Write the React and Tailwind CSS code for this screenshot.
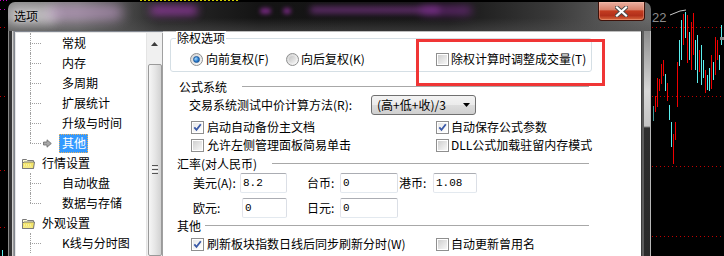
import React from 'react'

const RED = '#f00000'
const CYAN = '#5cf0f0'

// candle sticks of the chart behind the dialog: [x, top, bottom, colour]
const candles = [
  [653, 106, 121, '#4a9a9a'],
  [655, 96, 112, RED],
  [657, 78, 107, RED],
  [659, 79, 91, RED],
  [661, 64, 84, RED],
  [663, 60, 76, RED],
  [665, 74, 91, CYAN],
  [667, 83, 101, RED],
  [669, 105, 120, CYAN],
  [671, 122, 147, CYAN],
  [673, 134, 164, RED],
  [675, 122, 140, RED],
  [677, 62, 107, RED],
  [679, 40, 66, CYAN],
  [681, 20, 60, CYAN],
  [683, 14, 45, RED],
  [685, 12, 38, CYAN],
  [687, 15, 63, RED],
  [689, 32, 60, CYAN],
  [691, 22, 70, RED],
  [693, 13, 55, RED],
  [695, 40, 70, CYAN],
  [697, 35, 83, CYAN],
  [699, 50, 72, RED],
  [701, 45, 85, CYAN],
  [703, 60, 78, CYAN],
  [705, 70, 93, RED],
  [707, 75, 90, CYAN],
  [709, 68, 91, CYAN],
  [711, 55, 89, RED],
  [713, 62, 80, CYAN],
  [715, 37, 75, RED],
  [717, 40, 60, RED],
  [719, 55, 70, CYAN],
  [721, 25, 45, CYAN],
]

function ChartBackground() {
  return (
    <svg className="absolute inset-0" width="724" height="256" viewBox="0 0 724 256">
      <line x1="0" y1="0.5" x2="8" y2="0.5" stroke="#c000c0" strokeDasharray="1 2" />
      <line x1="140" y1="0.5" x2="240" y2="0.5" stroke="#d0d000" strokeDasharray="2 2" />
      <line x1="0" y1="9.5" x2="8" y2="9.5" stroke="#c000c0" strokeDasharray="1 3" />
      {[27, 96, 170, 227].map((y) => (
        <line key={'l' + y} x1="0" y1={y + 0.5} x2="8" y2={y + 0.5} stroke="#c00000" strokeDasharray="1 3" />
      ))}
      {[27, 96, 166, 236].map((y) => (
        <line key={'r' + y} x1="652" y1={y + 0.5} x2="724" y2={y + 0.5} stroke="#c00000" strokeDasharray="1 3" />
      ))}
      <line x1="2.5" y1="250" x2="2.5" y2="256" stroke={CYAN} />
      {candles.map(([x, y1, y2, c]) => (
        <line key={x} x1={x + 0.5} y1={y1} x2={x + 0.5} y2={y2} stroke={c} strokeWidth="1" />
      ))}
      <text x="652" y="22" fill="#8c8c8c" fontSize="13" fontFamily="Liberation Sans, sans-serif">22</text>
      <polyline points="670,15 680,11 686,10" fill="none" stroke="#c8c8c8" strokeWidth="1" />
      <rect x="720" y="37" width="4" height="3" fill="#8a8a8a" />
    </svg>
  )
}

function Checkbox({ checked }) {
  return (
    <span className="w-[13px] h-[13px] shrink-0 border border-[#8f8f8f] bg-white p-[1px] flex">
      <span
        className={`flex-1 flex items-center justify-center ${
          checked
            ? 'bg-[linear-gradient(135deg,#e8e8e8,#ffffff)]'
            : 'bg-[linear-gradient(135deg,#cfcfcf,#f7f7f7)]'
        }`}
      >
        {checked && (
          <svg width="9" height="9" viewBox="0 0 9 9">
            <path d="M1.3 4.3 L3.5 6.9 L7.8 1.2" fill="none" stroke="#3b5aa8" strokeWidth="1.8" />
          </svg>
        )}
      </span>
    </span>
  )
}

function Radio({ checked }) {
  return (
    <span className="w-[13px] h-[13px] shrink-0 rounded-full border border-[#8e8f8f] bg-[linear-gradient(135deg,#d2d2d2,#fbfbfb)] flex items-center justify-center">
      {checked ? (
        <span className="w-[7px] h-[7px] rounded-full border border-[#1d5a9c] bg-[radial-gradient(circle_at_35%_35%,#a8dcff,#2a7ed0_55%,#0e4a8e)]" />
      ) : (
        <span className="w-[7px] h-[7px] rounded-full bg-[linear-gradient(135deg,#c4c4c4,#f2f2f2)]" />
      )}
    </span>
  )
}

function Section({ label, labelW, pl, mt }) {
  return (
    <div className={`w-[419px] h-[14px] flex items-center ${pl} ${mt}`}>
      <span className={`${labelW} shrink-0`}>{label}</span>
      <div className="flex-1 h-px bg-[#a8a8a8] mb-[2px]" />
    </div>
  )
}

function TextBox({ value, w }) {
  return (
    <div
      className={`${w} h-[20px] shrink-0 rounded-[2px] border border-[#abadb3] border-l-[#e2e3ea] border-r-[#dbdfe6] border-b-[#e3e9ef] bg-white pl-[2px] pt-[2px] font-['Liberation_Mono',monospace] text-[11px] leading-[14px]`}
    >
      {value}
    </div>
  )
}

function Connector({ last }) {
  return (
    <div className="w-[11px] h-full flex flex-col shrink-0">
      <div className="h-[10px] border-l border-dotted border-[#a0a0a0]" />
      {last ? (
        <div className="h-[10px] border-t border-dotted border-[#a0a0a0]" />
      ) : (
        <div className="h-[10px] border-t border-l border-dotted border-[#a0a0a0]" />
      )}
    </div>
  )
}

function TreeChild({ label, last, selected }) {
  return (
    <div className="h-[20px] flex items-center">
      <div className="w-[14px] shrink-0" />
      <Connector last={last} />
      <div className="w-[2px] shrink-0" />
      <div className="w-[9px] shrink-0 flex items-center">
        {selected && (
          <svg width="9" height="9" viewBox="0 0 9 9">
            <path d="M0.5 3 H4 V0.8 L8.3 4.5 L4 8.2 V6 H0.5 Z" fill="#a8a8a8" stroke="#6a6a6a" strokeWidth="0.8" />
          </svg>
        )}
      </div>
      <div className="w-[7px] shrink-0" />
      {selected ? (
        <span className="h-[19px] flex items-center pl-[2px] pr-[1px] border border-dotted border-[#e8b060] bg-[#3399ff] text-white">
          {label}
        </span>
      ) : (
        <span className="pl-[3px]">{label}</span>
      )}
    </div>
  )
}

function FolderIcon() {
  return (
    <svg width="13" height="13" viewBox="0 0 13 13" className="shrink-0">
      <path d="M0.5 2.5 H4.5 L5.5 3.5 H11.5 V11.5 H0.5 Z" fill="#fffbd0" stroke="#7a7a7a" />
      <path d="M0.5 6.5 L2 5 H12.5 L11.5 11.5 H0.5 Z" fill="#f2e46a" stroke="#7a7a7a" />
      <path d="M2 8 H10 M1.5 10 H10" stroke="#fffbd0" strokeDasharray="1 1" />
    </svg>
  )
}

function TreeFolder({ label }) {
  return (
    <div className="h-[20px] flex items-center">
      <div className="w-[6px] shrink-0" />
      <FolderIcon />
      <div className="w-[7px] shrink-0" />
      <span>{label}</span>
    </div>
  )
}

function Tree() {
  return (
    <div className="w-[149px] shrink-0 flex border-l border-t border-[#828790]">
      <div className="flex-1 flex border-l border-t border-[#e6e6e6] bg-white">
        <div className="flex-1 flex flex-col">
          <TreeChild label="常规" />
          <TreeChild label="内存" />
          <TreeChild label="多周期" />
          <TreeChild label="扩展统计" />
          <TreeChild label="升级与时间" />
          <TreeChild label="其他" last selected />
          <TreeFolder label="行情设置" />
          <TreeChild label="自动收盘" />
          <TreeChild label="数据与存储" last />
          <TreeFolder label="外观设置" />
          <TreeChild label="K线与分时图" />
        </div>
        <div className="w-[16px] shrink-0 bg-[#f0f0f0] border-l border-[#e4e4e4] flex flex-col items-center">
          <div className="h-[21px] w-full flex items-center justify-center pt-[1px]">
            <svg width="7" height="4" viewBox="0 0 7 4">
              <path d="M0 4 L3.5 0 L7 4 Z" fill="#3c3c3c" />
            </svg>
          </div>
          <div className="h-[10px]" />
          <div className="w-[14px] flex-1 rounded-[2px] border border-[#9a9a9a] bg-[linear-gradient(to_right,#f6f6f6,#e6e6e6_50%,#d2d2d2)] flex flex-col items-center gap-[1px] pt-[100px]">
            <div className="w-[6px] h-px bg-[#555]" />
            <div className="w-[6px] h-px bg-[#f8f8f8]" />
            <div className="w-[6px] h-px bg-[#555]" />
            <div className="w-[6px] h-px bg-[#f8f8f8]" />
            <div className="w-[6px] h-px bg-[#555]" />
          </div>
        </div>
        <div className="w-px shrink-0 bg-[#a0a0a0]" />
      </div>
    </div>
  )
}

function OptionsPanel() {
  return (
    <div className="w-[478px] shrink-0 bg-white border-t border-[#bdbdbd] flex flex-col pl-[7px]">
      <div className="relative mt-[6px] w-[422px] h-[34px] rounded-[3px] border border-[#d5dfe5]">
        <span className="absolute left-[5px] -top-[8px] bg-white px-[1px]">除权选项</span>
        <div className="h-full flex items-center pt-[8px] pl-[19px]">
          <label className="w-[96px] shrink-0 flex items-center gap-[3px]">
            <Radio checked />
            <span>向前复权(F)</span>
          </label>
          <label className="w-[150px] shrink-0 flex items-center gap-[2px]">
            <Radio />
            <span>向后复权(K)</span>
          </label>
          <label className="flex items-center gap-[2px]">
            <Checkbox />
            <span>除权计算时调整成交量(T)</span>
          </label>
        </div>
      </div>

      <Section label="公式系统" labelW="w-[63px]" pl="pl-[9px]" mt="mt-[8px]" />
      <div className="mt-[1px] h-[20px] flex items-center pl-[19px]">
        <span className="w-[182px] shrink-0">交易系统测试中价计算方法(R):</span>
        <div className="w-[105px] h-[20px] rounded-[3px] border border-[#707070] bg-[linear-gradient(#f3f3f3,#ebebeb_50%,#dddddd_50%,#cfcfcf)] flex items-center justify-between pl-[5px] pr-[5px]">
          <span>(高+低+收)/3</span>
          <svg width="7" height="4" viewBox="0 0 7 4">
            <path d="M0 0 L7 0 L3.5 4 Z" fill="#000" />
          </svg>
        </div>
      </div>
      <div className="mt-[5px] h-[14px] flex items-center pl-[21px]">
        <label className="w-[245px] shrink-0 flex items-center gap-[3px]">
          <Checkbox checked />
          <span>启动自动备份主文档</span>
        </label>
        <label className="flex items-center gap-[2px]">
          <Checkbox checked />
          <span>自动保存公式参数</span>
        </label>
      </div>
      <div className="mt-[4px] h-[14px] flex items-center pl-[21px]">
        <label className="w-[245px] shrink-0 flex items-center gap-[3px]">
          <Checkbox />
          <span>允许左侧管理面板简易单击</span>
        </label>
        <label className="flex items-center gap-[2px]">
          <Checkbox />
          <span>DLL公式加载驻留内存模式</span>
        </label>
      </div>

      <Section label="汇率(对人民币)" labelW="w-[95px]" pl="pl-[7px]" mt="mt-[5px]" />
      <div className="mt-[2px] h-[20px] flex items-center pl-[23px]">
        <span className="w-[47px] shrink-0">美元(A):</span>
        <TextBox value="8.2" w="w-[47px]" />
        <div className="w-[20px] shrink-0" />
        <span className="w-[33px] shrink-0">台币:</span>
        <TextBox value="0" w="w-[58px]" />
        <div className="w-[1px] shrink-0" />
        <span className="w-[34px] shrink-0">港币:</span>
        <TextBox value="1.08" w="w-[44px]" />
      </div>
      <div className="mt-[5px] h-[20px] flex items-center pl-[23px]">
        <span className="w-[49px] shrink-0">欧元:</span>
        <TextBox value="0" w="w-[45px]" />
        <div className="w-[20px] shrink-0" />
        <span className="w-[33px] shrink-0">日元:</span>
        <TextBox value="0" w="w-[58px]" />
      </div>

      <Section label="其他" labelW="w-[28px]" pl="pl-[7px]" mt="mt-[1px]" />
      <div className="mt-[4px] h-[14px] flex items-center pl-[21px]">
        <label className="w-[245px] shrink-0 flex items-center gap-[3px]">
          <Checkbox checked />
          <span>刷新板块指数日线后同步刷新分时(W)</span>
        </label>
        <label className="flex items-center gap-[2px]">
          <Checkbox />
          <span>自动更新曾用名</span>
        </label>
      </div>
    </div>
  )
}

function TitleBar() {
  return (
    <div className="relative h-[29px] shrink-0 overflow-hidden bg-[image:linear-gradient(to_bottom,rgba(0,0,0,0)_55%,rgba(80,80,80,0.55)),linear-gradient(to_right,#8a8a8a_0px,#7a7a7a_70px,#2a2a2a_150px,#141414_250px,#161616_440px,#383838_540px,#585858_600px,#6a6a6a_643px)]">
      <div className="absolute left-[0px] top-[4px] w-[50px] h-[18px] rounded-full bg-[#d4d0d4] opacity-70 blur-[5px]" />
      <div className="absolute left-[40px] top-[3px] w-[75px] h-[15px] rounded-full bg-[#c8a0d0] opacity-60 blur-[6px]" />
      <div className="absolute left-[142px] top-[4px] w-[48px] h-[9px] rounded-full bg-[#b040c0] opacity-70 blur-[4px]" />
      <div className="absolute left-[252px] top-[6px] w-[11px] h-[6px] rounded-full bg-[#9a30a8] opacity-70 blur-[2px]" />
      <div className="absolute left-[275px] top-[6px] w-[8px] h-[6px] rounded-full bg-[#9a30a8] opacity-70 blur-[2px]" />
      <div className="absolute left-[302px] top-[5px] w-[130px] h-[6px] rounded-full bg-[#a040b4] opacity-60 blur-[3px]" />
      <div className="absolute left-[412px] top-[4px] w-[52px] h-[9px] rounded-full bg-[#8a30a0] opacity-60 blur-[4px]" />
      <span className="absolute left-[6px] top-[7px] text-[12px] leading-[14px] text-black [text-shadow:0_0_3px_rgba(255,255,255,0.5)]">
        选项
      </span>
      <div className="absolute right-[6px] top-0 w-[47px] h-[19px] rounded-b-[4px] border border-t-0 border-[#3e120a] bg-[linear-gradient(to_bottom,#eab0a2,#d8826c_42%,#c33c20_50%,#b2301a_75%,#d8683e)] flex items-center justify-center shadow-[inset_0_0_0_1px_rgba(255,200,180,0.35)]">
        <svg width="13" height="11" viewBox="0 0 13 11">
          <path d="M2 1.5 L11 9.5 M11 1.5 L2 9.5" stroke="#4a4a4a" strokeWidth="4" strokeLinecap="square" />
          <path d="M2 1.5 L11 9.5 M11 1.5 L2 9.5" stroke="#ffffff" strokeWidth="2.2" strokeLinecap="square" />
        </svg>
      </div>
    </div>
  )
}

export default function App() {
  return (
    <div className="relative w-[724px] h-[256px] overflow-hidden bg-black font-['Noto_Sans_CJK_SC','Noto_Sans',sans-serif] text-[12px] leading-[14px] text-black">
      <ChartBackground />

      {/* dialog window */}
      <div className="absolute left-[8px] top-[2px] w-[643px] h-[254px] rounded-t-[7px] overflow-hidden flex flex-col">
        <TitleBar />
        <div className="flex-1 flex">
          <div className="w-[6px] shrink-0 bg-[linear-gradient(to_right,#8a8a8a_0px,#8a8a8a_1px,#353535_1px,#353535_4px,#cfcfcf_4px,#cfcfcf_5px,#9a9a9a_5px)]" />
          <Tree />
          <OptionsPanel />
          <div className="w-[10px] shrink-0 flex">
            <div className="w-px bg-[#3c3c3c]" />
            <div className="w-[2px] bg-[#5c5c5c]" />
            <div className="w-[6px] bg-[linear-gradient(to_bottom,#8c8c8c,#d8d8d8_60px,#c4c4c4_95px,#2e2e2e_97px,#2a2a2a)]" />
            <div className="w-px bg-[#b8b8b8]" />
          </div>
        </div>
      </div>

      {/* red highlight drawn over the dialog */}
      <div className="absolute left-[416px] top-[39px] w-[189px] h-[47px] border-[3px] border-[#f03535]" />
    </div>
  )
}
